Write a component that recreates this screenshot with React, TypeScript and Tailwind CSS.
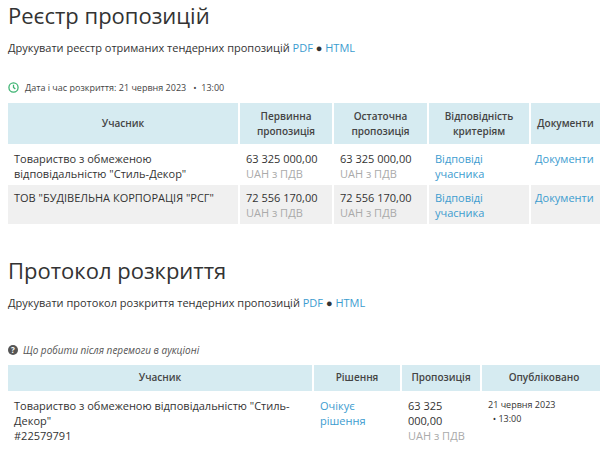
export default function App() {
  const f = { fontFamily: '"Open Sans", sans-serif' };
  const th = "bg-[#d6ebf1] font-semibold text-[10px] text-[#444] text-center align-middle px-1";
  const td = "align-top px-[6px] pt-[5px] pb-[2px] text-[11px] leading-[15px] text-[#333]";
  return (
    <div style={f} className="w-[600px] h-[458px] overflow-hidden bg-white pl-[8px]">
      <h1 className="text-[22px] leading-[28px] text-[#333] font-normal pt-[1px]">Реєстр пропозицій</h1>
      <p className="text-[11px] text-[#333] mt-[11px]">Друкувати реєстр отриманих тендерних пропозицій <span className="text-[#3c9ccf]">PDF</span> ● <span className="text-[#3c9ccf]">HTML</span></p>
      <div className="flex items-center gap-[6px] text-[9px] text-[#444] mt-[24px]">
        <svg width="11" height="11" viewBox="0 0 12 12" fill="none" stroke="#3cb371" strokeWidth="1.4"><circle cx="6" cy="6" r="5"/><path d="M6 3v3l2 1.5"/></svg>
        <span>Дата і час розкриття: 21 червня 2023 &nbsp; • &nbsp;13:00</span>
      </div>
      <table className="mt-[7px] border-separate border-spacing-[2px] -mx-[2px]" style={{ width: 596 }}>
        <colgroup><col style={{ width: 230 }} /><col style={{ width: 92 }} /><col style={{ width: 93 }} /><col style={{ width: 100 }} /><col /></colgroup>
        <thead><tr className="h-[41px]">
          <th className={th}>Учасник</th><th className={th}>Первинна<br/>пропозиція</th><th className={th}>Остаточна<br/>пропозиція</th><th className={th}>Відповідність<br/>критеріям</th><th className={th}>Документи</th>
        </tr></thead>
        <tbody>
          <tr className="h-[36px]">
            <td className={td}>Товариство з обмеженою<br/>відповідальністю "Стиль-Декор"</td>
            <td className={td}>63 325 000,00<br/><span className="text-[#aaa]">UAH з ПДВ</span></td>
            <td className={td}>63 325 000,00<br/><span className="text-[#aaa]">UAH з ПДВ</span></td>
            <td className={td + " text-[#3c9ccf]!"}>Відповіді<br/>учасника</td>
            <td className={td + " text-[#3c9ccf]! pl-[4px]"}>Документи</td>
          </tr>
          <tr className="h-[39px] bg-[#f0f0f0]">
            <td className={td}>ТОВ "БУДІВЕЛЬНА КОРПОРАЦІЯ "РСГ"</td>
            <td className={td}>72 556 170,00<br/><span className="text-[#aaa]">UAH з ПДВ</span></td>
            <td className={td}>72 556 170,00<br/><span className="text-[#aaa]">UAH з ПДВ</span></td>
            <td className={td + " text-[#3c9ccf]!"}>Відповіді<br/>учасника</td>
            <td className={td + " text-[#3c9ccf]! pl-[4px]"}>Документи</td>
          </tr>
        </tbody>
      </table>
      <h1 className="text-[22px] leading-[28px] text-[#333] font-normal mt-[30px]">Протокол розкриття</h1>
      <p className="text-[11px] text-[#333] mt-[11px]">Друкувати протокол розкриття тендерних пропозицій <span className="text-[#3c9ccf]">PDF</span> ● <span className="text-[#3c9ccf]">HTML</span></p>
      <div className="flex items-center gap-[5px] text-[10px] italic text-[#555] mt-[31px]">
        <span className="w-[10px] h-[10px] rounded-full bg-[#555] text-white text-[8px] not-italic font-bold flex items-center justify-center">?</span>
        <span>Що робити після перемоги в аукціоні</span>
      </div>
      <table className="mt-[5px] border-separate border-spacing-[2px] -mx-[2px]" style={{ width: 602 }}>
        <colgroup><col style={{ width: 304 }} /><col style={{ width: 86 }} /><col style={{ width: 78 }} /><col /></colgroup>
        <thead><tr className="h-[26px]">
          <th className={th}>Учасник</th><th className={th}>Рішення</th><th className={th}>Пропозиція</th><th className={th}>Опубліковано</th>
        </tr></thead>
        <tbody><tr>
          <td className={td}>Товариство з обмеженою відповідальністю "Стиль-<br/>Декор"<br/>#22579791</td>
          <td className={td + " text-[#3c9ccf]!"}>Очікує<br/>рішення</td>
          <td className={td}>63 325<br/>000,00<br/><span className="text-[#aaa]">UAH з ПДВ</span></td>
          <td className={td + " text-[9px]! leading-[14px]!"}>21 червня 2023<br/>&nbsp;&nbsp;• 13:00</td>
        </tr></tbody>
      </table>
    </div>
  );
}
